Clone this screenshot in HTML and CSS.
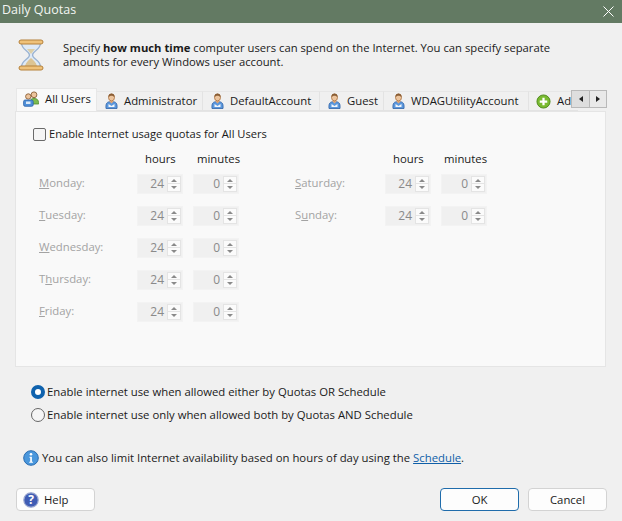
FILE: index.html
```html
<!DOCTYPE html>
<html lang="en">
<head>
<meta charset="utf-8">
<title>Daily Quotas</title>
<link rel="stylesheet" href="styles.css">
</head>
<body>
<svg class="defs" width="0" height="0">
  <defs>
    <symbol id="user" viewBox="0 0 13 16">
      <path d="M1 15.500c-.5-5 .7-7 5.500-7s6 2 5.500 7z" fill="#5b97dc" stroke="#2f62a6" stroke-width=".8"/>
      <path d="M3.500 11l3 2 3-2v3h-6z" fill="#f3f6fa"/>
      <path d="M4 8l2.500 2.500L9 8z" fill="#e2a878"/>
      <ellipse cx="6.500" cy="4.500" rx="3" ry="3.400" fill="#ecc49d" stroke="#a9713f" stroke-width=".8"/>
      <path d="M3.500 4.400C3.300 1.600 4.800.6 6.500.6s3.200 1 3 3.800C8.600 3 7.400 2.800 6.500 2.800s-2.100.2-3 1.600z" fill="#8a5d34"/>
    </symbol>
  </defs>
</svg>
<div class="dialog">
  <header class="titlebar">
    <span class="title">Daily Quotas</span>
    <svg class="close" width="11" height="11" viewBox="0 0 11 11"><path d="M.5.500l10 10M10.500.500l-10 10" stroke="#fff" stroke-width="1" fill="none"/></svg>
  </header>
  <div class="intro">
    <svg class="hourglass" width="26" height="32" viewBox="0 0 26 32">
      <path d="M3.500 4c0 7 8 8 8 12s-8 5-8 12h19c0-7-8-8-8-12s8-5 8-12z" fill="#dfeaf6" stroke="#9ab3d2" stroke-width="1.300"/>
      <path d="M7 27c1-4 4-6 6-8 2 2 5 4 6 8z" fill="#dcc493"/>
      <path d="M9 10h8l-4 5z" fill="#dccfa8"/>
      <rect x="1" y="1" width="24" height="4" rx="2" fill="#efc27a" stroke="#b5813a"/>
      <rect x="1" y="27" width="24" height="4" rx="2" fill="#efc27a" stroke="#b5813a"/>
    </svg>
    <p class="intro-text">Specify <b>how much time</b> computer users can spend on the Internet. You can specify separate amounts for every Windows user account.</p>
  </div>
  <div class="tabs-wrap">
    <nav class="tabs">
      <div class="tab tab-active">
        <svg class="tab-icon-wide" width="16" height="16" viewBox="0 0 16 16">
          <circle cx="11" cy="3.800" r="2.900" fill="#ecc49d" stroke="#8a5d34" stroke-width=".9"/>
          <path d="M7 13c0-4.500 1.200-5.500 4-5.500s4.700 1 4.700 5.500z" fill="#7dbb4e" stroke="#4e8a2c" stroke-width=".8"/>
          <circle cx="5.300" cy="5.500" r="2.700" fill="#ecc49d" stroke="#8a5d34" stroke-width=".9"/>
          <rect x=".6" y="9" width="9.600" height="6.300" rx="1.500" fill="#4f8fd8" stroke="#2c62a8" stroke-width=".8"/>
          <path d="M3 10.500h4.500V13H3z" fill="#dbe9f8"/>
        </svg>
        <span>All Users</span>
      </div>
      <div class="tab tab-admin"><svg class="tab-icon" width="13" height="16"><use href="#user"/></svg><span>Administrator</span></div>
      <div class="tab tab-default"><svg class="tab-icon" width="13" height="16"><use href="#user"/></svg><span>DefaultAccount</span></div>
      <div class="tab tab-guest"><svg class="tab-icon" width="13" height="16"><use href="#user"/></svg><span>Guest</span></div>
      <div class="tab tab-wdag"><svg class="tab-icon" width="13" height="16"><use href="#user"/></svg><span>WDAGUtilityAccount</span></div>
      <div class="tab tab-last">
        <svg class="tab-icon" width="15" height="15" viewBox="0 0 16 16"><circle cx="8" cy="8" r="7" fill="#79ba30" stroke="#4f8a1c"/><path d="M8 4v8M4 8h8" stroke="#fff" stroke-width="2.400"/></svg>
        <span>Add</span>
      </div>
    </nav>
    <div class="scroller">
      <div class="scroll-btn scroll-left"><i class="tri-left"></i></div>
      <div class="scroll-btn"><i class="tri-right"></i></div>
    </div>
  </div>
  <section class="panel">
    <label class="enable"><span class="checkbox"></span>Enable Internet usage quotas for All Users</label>
    <div class="week">
      <div class="week-col">
        <div class="heads"><span class="head">hours</span><span class="head">minutes</span></div>
        <div class="day"><span class="day-name"><u>M</u>onday:</span><div class="spin spin-h"><span class="val">24</span><span class="arrows"><i class="up"></i><i class="down"></i></span></div><div class="spin"><span class="val">0</span><span class="arrows"><i class="up"></i><i class="down"></i></span></div></div>
        <div class="day"><span class="day-name"><u>T</u>uesday:</span><div class="spin spin-h"><span class="val">24</span><span class="arrows"><i class="up"></i><i class="down"></i></span></div><div class="spin"><span class="val">0</span><span class="arrows"><i class="up"></i><i class="down"></i></span></div></div>
        <div class="day"><span class="day-name"><u>W</u>ednesday:</span><div class="spin spin-h"><span class="val">24</span><span class="arrows"><i class="up"></i><i class="down"></i></span></div><div class="spin"><span class="val">0</span><span class="arrows"><i class="up"></i><i class="down"></i></span></div></div>
        <div class="day"><span class="day-name">T<u>h</u>ursday:</span><div class="spin spin-h"><span class="val">24</span><span class="arrows"><i class="up"></i><i class="down"></i></span></div><div class="spin"><span class="val">0</span><span class="arrows"><i class="up"></i><i class="down"></i></span></div></div>
        <div class="day"><span class="day-name"><u>F</u>riday:</span><div class="spin spin-h"><span class="val">24</span><span class="arrows"><i class="up"></i><i class="down"></i></span></div><div class="spin"><span class="val">0</span><span class="arrows"><i class="up"></i><i class="down"></i></span></div></div>
      </div>
      <div class="week-col">
        <div class="heads"><span class="head">hours</span><span class="head">minutes</span></div>
        <div class="day"><span class="day-name"><u>S</u>aturday:</span><div class="spin spin-h"><span class="val">24</span><span class="arrows"><i class="up"></i><i class="down"></i></span></div><div class="spin"><span class="val">0</span><span class="arrows"><i class="up"></i><i class="down"></i></span></div></div>
        <div class="day"><span class="day-name">S<u>u</u>nday:</span><div class="spin spin-h"><span class="val">24</span><span class="arrows"><i class="up"></i><i class="down"></i></span></div><div class="spin"><span class="val">0</span><span class="arrows"><i class="up"></i><i class="down"></i></span></div></div>
      </div>
    </div>
  </section>
  <div class="radios">
    <label class="radio-row"><span class="radio radio-on"></span>Enable internet use when allowed either by Quotas OR Schedule</label>
    <label class="radio-row"><span class="radio"></span>Enable internet use only when allowed both by Quotas AND Schedule</label>
  </div>
  <div class="info">
    <svg width="16" height="16" viewBox="0 0 16 16"><circle cx="8" cy="8" r="7.300" fill="#4a97dc" stroke="#2a6cb0"/><circle cx="8" cy="4.300" r="1.300" fill="#fff"/><path d="M6.500 6.800h2.400v5h1v1H6.200v-1h1v-4h-.7z" fill="#fff"/></svg>
    <span>You can also limit Internet availability based on hours of day using the <a class="link" href="#">Schedule</a>.</span>
  </div>
  <footer class="buttons">
    <button class="btn btn-help" type="button">
      <svg width="16" height="16" viewBox="0 0 16 16"><circle cx="8" cy="8" r="7.200" fill="#3f5cb4" stroke="#97a5cf" stroke-width="1.200"/><text class="q" x="8" y="12" text-anchor="middle">?</text></svg>
      Help
    </button>
    <div class="buttons-right">
      <button class="btn btn-ok" type="button">OK</button>
      <button class="btn" type="button">Cancel</button>
    </div>
  </footer>
</div>
</body>
</html>
```
FILE: styles.css
```css
* { box-sizing: border-box; }
html, body { margin: 0; padding: 0; }
body {
  width: 622px;
  height: 521px;
  overflow: hidden;
  background: #f0f0f0;
  color: #1a1a1a;
  font: 11.34px/16px "Open Sans", "Noto Sans", sans-serif;
}
.defs { display: block; height: 0; }
.dialog { display: flex; flex-direction: column; height: 521px; }
.titlebar {
  display: flex;
  align-items: center;
  justify-content: space-between;
  height: 23px;
  padding: 0 8px 4px 2px;
  background: #637a63;
  color: #f2f5f2;
  font-size: 12.5px;
}
.close { margin-top: 3px; }
.intro {
  display: flex;
  align-items: center;
  gap: 19px;
  margin-top: 16px;
  padding: 0 18px;
  height: 32px;
}
.intro-text { margin: 0; width: 510px; font-size: 11.25px; line-height: 14px; }
.tabs-wrap {
  display: flex;
  margin: 17px 15px 0 15px;
  height: 23px;
  overflow: hidden;
  position: relative;
}
.tabs { display: flex; flex: 0 0 auto; align-items: flex-end; padding-left: 1px; width: 577px; overflow: hidden; }
.tab {
  display: flex;
  align-items: center;
  flex: 0 0 auto;
  gap: 6px;
  height: 20px;
  padding: 0 0 0 8px;
  background: #f0f0f0;
  border-top: 1px solid #e7e7e7;
  border-right: 1px solid #e3e3e3;
  border-bottom: 1px solid #e3e3e3;
  white-space: nowrap;
}
.tab-active {
  height: 23px;
  width: 81px;
  padding: 0 0 3px 6px;
  gap: 6px;
  background: #f9f9f9;
  border: 1px solid #e7e7e7;
  border-bottom: 0;
}
.tab-admin { width: 106px; }
.tab-default { width: 117px; }
.tab-guest { width: 64px; }
.tab-wdag { width: 145px; }
.tab-last { border-right: 0; padding-left: 7px; }
.scroller {
  position: absolute;
  right: 0;
  top: 2px;
  display: flex;
  width: 36px;
  height: 18px;
  background: #f0f0f0;
}
.scroll-btn {
  width: 18px;
  height: 18px;
  display: flex;
  align-items: center;
  justify-content: center;
  background: #e9e9e9;
  border: 1px solid #b9b9b9;
}
.scroll-left { border-right: 0; background: #dedede; }
.tri-left { border: 3px solid transparent; border-left: 0; border-right: 4px solid #222; }
.tri-right { border: 3px solid transparent; border-right: 0; border-left: 4px solid #222; }
.panel {
  height: 256px;
  margin: 0 16px 0 15px;
  padding: 14px 18px 0 17px;
  background: #f9f9f9;
  border: 1px solid #e5e5e5;
}
.enable { display: flex; align-items: center; gap: 3px; height: 16px; font-size: 11.15px; }
.checkbox {
  width: 13px;
  height: 13px;
  background: #f5f5f5;
  border: 1px solid #6a6a6a;
  border-radius: 2px;
}
.week { display: flex; margin-top: 9px; margin-left: 6px; }
.week-col { width: 256px; }
.week-col + .week-col { width: 200px; }
.heads { display: flex; height: 16px; padding-left: 98px; margin-bottom: 5px; }
.week-col + .week-col .heads { padding-left: 90px; }
.head { width: 56px; padding-left: 8px; }
.head + .head { padding-left: 4px; }
.day { display: flex; align-items: center; height: 22px; margin-bottom: 10px; }
.day-name { width: 98px; color: #a3a3a3; }
.week-col + .week-col .day-name { width: 90px; }
.spin {
  display: flex;
  align-items: center;
  justify-content: flex-end;
  width: 46px;
  height: 20px;
  margin-top: 2px;
  padding-right: 1px;
  background: #f0f0f0;
  border: 1px solid #f3f3f3;
  color: #8a8a8a;
}
.spin-h { margin-right: 10px; }
.val { margin-right: 3px; font-size: 12px; }
.arrows { display: flex; flex-direction: column; width: 14px; height: 16px; }
.arrows i {
  display: flex;
  align-items: center;
  justify-content: center;
  height: 8px;
  background: #fbfbfb;
  border: 1px solid #e4e4e4;
}
.arrows i + i { border-top: 0; }
.arrows i::before { content: ""; border: 3px solid transparent; }
.up::before { border-top: 0 !important; border-bottom: 3px solid #8a8a8a !important; }
.down::before { border-bottom: 0 !important; border-top: 3px solid #8a8a8a !important; }
.radios { display: flex; flex-direction: column; gap: 7px; margin: 17px 0 0 31px; }
.radio-row { display: flex; align-items: center; gap: 2px; height: 16px; }
.radio { width: 14px; height: 14px; border: 1px solid #666; border-radius: 50%; background: #f5f5f5; }
.radio-on { border: 4px solid #0f62ad; background: #fff; }
.info { display: flex; align-items: center; gap: 3px; margin: 27px 0 0 23px; height: 16px; }
.link { color: #0f5fa8; }
.q { fill: #fff; font: bold 12px "Open Sans", sans-serif; }
.buttons { display: flex; justify-content: space-between; margin: 22px 15px 0 16px; }
.buttons-right { display: flex; gap: 9px; }
.btn {
  width: 79px;
  height: 23px;
  padding: 0;
  background: #fdfdfd;
  border: 1px solid #d3d3d3;
  border-radius: 4px;
  color: #1a1a1a;
  font: inherit;
}
.btn-help { display: flex; align-items: center; gap: 5px; padding-left: 6px; }
.btn-ok { border-color: #1f6cab; }
```
